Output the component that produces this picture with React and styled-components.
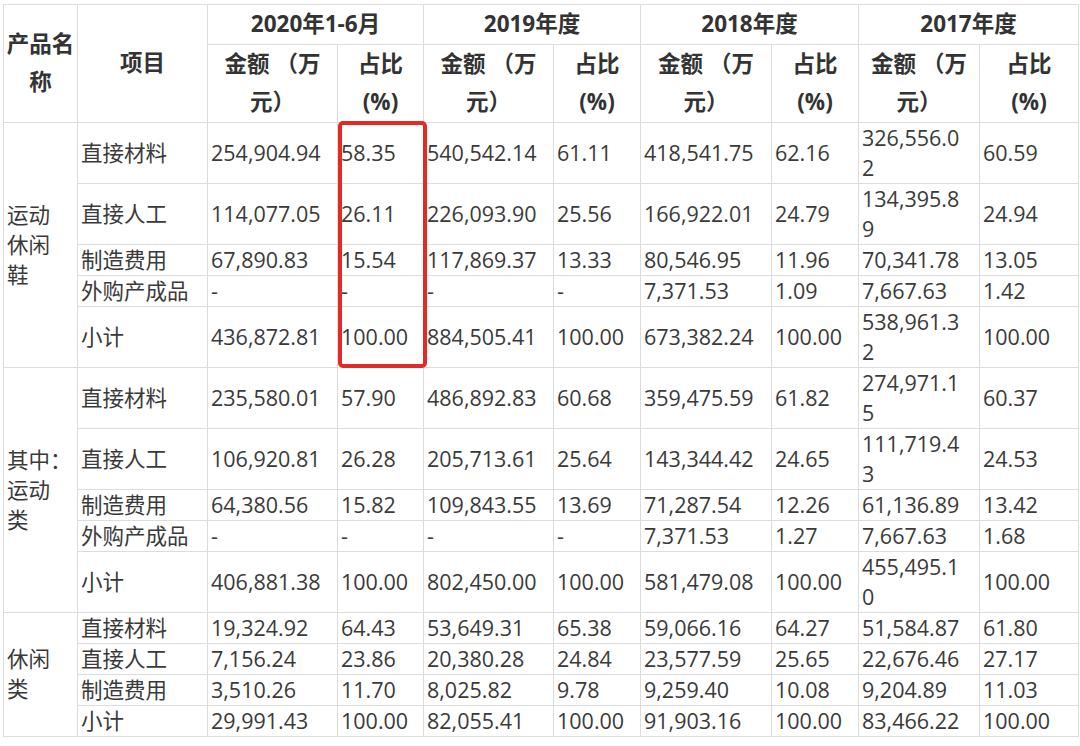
import React from 'react'
import styled, { createGlobalStyle } from 'styled-components'

const GlobalStyle = createGlobalStyle`
  html, body {
    margin: 0;
    padding: 0;
    background: #fff;
  }
  body {
    font-family: 'Open Sans', 'Noto Sans CJK SC', sans-serif;
    color: #3a3a3a;
  }
`

const widths = [74, 130, 130, 86, 130, 87, 131, 87, 121, 99]

const periods = ['2020年1-6月', '2019年度', '2018年度', '2017年度']

const groups = [
  {
    name: ['运动', '休闲', '鞋'],
    rows: [
      ['直接材料', '254,904.94', '58.35', '540,542.14', '61.11', '418,541.75', '62.16', '326,556.02', '60.59'],
      ['直接人工', '114,077.05', '26.11', '226,093.90', '25.56', '166,922.01', '24.79', '134,395.89', '24.94'],
      ['制造费用', '67,890.83', '15.54', '117,869.37', '13.33', '80,546.95', '11.96', '70,341.78', '13.05'],
      ['外购产成品', '-', '-', '-', '-', '7,371.53', '1.09', '7,667.63', '1.42'],
      ['小计', '436,872.81', '100.00', '884,505.41', '100.00', '673,382.24', '100.00', '538,961.32', '100.00']
    ]
  },
  {
    name: ['其中：', '运动', '类'],
    rows: [
      ['直接材料', '235,580.01', '57.90', '486,892.83', '60.68', '359,475.59', '61.82', '274,971.15', '60.37'],
      ['直接人工', '106,920.81', '26.28', '205,713.61', '25.64', '143,344.42', '24.65', '111,719.43', '24.53'],
      ['制造费用', '64,380.56', '15.82', '109,843.55', '13.69', '71,287.54', '12.26', '61,136.89', '13.42'],
      ['外购产成品', '-', '-', '-', '-', '7,371.53', '1.27', '7,667.63', '1.68'],
      ['小计', '406,881.38', '100.00', '802,450.00', '100.00', '581,479.08', '100.00', '455,495.10', '100.00']
    ]
  },
  {
    name: ['休闲', '类'],
    rows: [
      ['直接材料', '19,324.92', '64.43', '53,649.31', '65.38', '59,066.16', '64.27', '51,584.87', '61.80'],
      ['直接人工', '7,156.24', '23.86', '20,380.28', '24.84', '23,577.59', '25.65', '22,676.46', '27.17'],
      ['制造费用', '3,510.26', '11.70', '8,025.82', '9.78', '9,259.40', '10.08', '9,204.89', '11.03'],
      ['小计', '29,991.43', '100.00', '82,055.41', '100.00', '91,903.16', '100.00', '83,466.22', '100.00']
    ]
  }
]

// the 2017 amount column is the narrowest one, long figures wrap there
const NARROW_COL = 7

const App = () => (
  <>
    <GlobalStyle />
    <Page>
      <Sheet>
        <Table>
          <colgroup>
            {widths.map((w, i) => <col key={i} style={{ width: w }} />)}
          </colgroup>
          <thead>
            <tr>
              <Head rowSpan={2}>产品名<br />称</Head>
              <Head rowSpan={2}>项目</Head>
              {periods.map(p => <Head key={p} colSpan={2}>{p}</Head>)}
            </tr>
            <tr>
              {periods.map(p => (
                <React.Fragment key={p}>
                  <Head>金额 （万<br />元）</Head>
                  <Head>占比<br />(%)</Head>
                </React.Fragment>
              ))}
            </tr>
          </thead>
          <tbody>
            {groups.map((g, gi) => g.rows.map((r, ri) => (
              <tr key={`${gi}-${ri}`}>
                {ri === 0 && (
                  <Cell rowSpan={g.rows.length}>
                    {g.name.map((n, k) => <React.Fragment key={k}>{k > 0 && <br />}{n}</React.Fragment>)}
                  </Cell>
                )}
                {r.map((v, ci) => <Cell key={ci} narrow={ci === NARROW_COL}>{v}</Cell>)}
              </tr>
            )))}
          </tbody>
        </Table>
        <Highlight />
      </Sheet>
    </Page>
  </>
)

const Page = styled.div`
  width: 1080px;
  height: 746px;
  padding: 4px 0 0 3px;
  box-sizing: border-box;
  background: #fff;
  overflow: hidden;
`

const Sheet = styled.div`
  position: relative;
  width: 1076px;
`

const Table = styled.table`
  table-layout: fixed;
  border-collapse: collapse;
  width: 1076px;
  font-size: 21.5px;
`

const Head = styled.th`
  border: 1px solid #dcdcdc;
  padding: 0;
  font-size: 22.5px;
  font-weight: 700;
  color: #333;
  line-height: 38.5px;
  text-align: center;
  vertical-align: middle;
  white-space: nowrap;
`

const Cell = styled.td.withConfig({ shouldForwardProp: p => p !== 'narrow' })`
  border: 1px solid #dcdcdc;
  padding: 0 ${({ narrow }) => (narrow ? '8px' : '3px')} 0 3px;
  line-height: 30px;
  text-align: left;
  vertical-align: middle;
  word-break: break-all;
  color: #3a3a3a;
`

const Highlight = styled.div`
  position: absolute;
  left: 335px;
  top: 117px;
  width: 89px;
  height: 247px;
  border: 4px solid #e42a24;
  border-radius: 5px;
  box-sizing: border-box;
  pointer-events: none;
`

export default App
